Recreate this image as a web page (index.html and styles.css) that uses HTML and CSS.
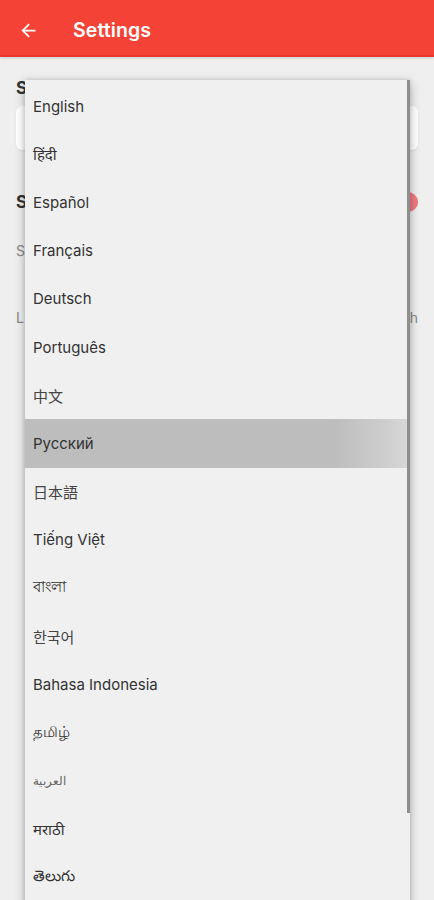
FILE: index.html
```html
<!DOCTYPE html>
<html lang="en">
<head>
<meta charset="utf-8">
<title>Settings</title>
<link rel="stylesheet" href="styles.css">
</head>
<body>
<div class="app">
  <header class="appbar">
    <svg class="back" width="20" height="20" viewBox="0 0 24 24" aria-hidden="true">
      <path d="M20 11H7.83l5.59-5.59L12 4l-8 8 8 8 1.41-1.41L7.83 13H20v-2z" fill="#fff"/>
    </svg>
    <h1 class="title">Settings</h1>
  </header>
  <main class="content">
    <h2 class="section-title">S<span class="under">elect Language</span></h2>
    <div class="select-card"></div>
    <div class="row">
      <h2 class="section-title">S<span class="under">ound</span></h2>
      <span class="toggle"><span class="thumb"></span></span>
    </div>
    <p class="hint">S<span class="under">ound effects</span></p>
    <div class="row muted">
      <span>L<span class="under">anguage</span></span>
      <span>h</span>
    </div>
  </main>

  <div class="menu">
    <ul class="menu-list">
      <li>English</li>
      <li>हिंदी</li>
      <li>Español</li>
      <li>Français</li>
      <li>Deutsch</li>
      <li>Português</li>
      <li class="cjk">中文</li>
      <li class="active">Русский</li>
      <li class="cjk">日本語</li>
      <li>Tiếng Việt</li>
      <li>বাংলা</li>
      <li class="cjk">한국어</li>
      <li>Bahasa Indonesia</li>
      <li>தமிழ்</li>
      <li class="ar">العربية</li>
      <li>मराठी</li>
      <li>తెలుగు</li>
    </ul>
    <div class="scrollbar"></div>
  </div>
</div>
</body>
</html>
```
FILE: styles.css
```css
* { box-sizing: border-box; }
html, body { margin: 0; padding: 0; }
body {
  background: #efefef;
  font-family: Inter, "Open Sans", "Noto Sans", "Noto Sans CJK SC", sans-serif;
  color: #333;
}
.app {
  position: relative;
  width: 434px;
  height: 900px;
  overflow: hidden;
}
.appbar {
  height: 57px;
  background: #f44336;
  border-bottom: 2px solid #e8392c;
  display: flex;
  align-items: center;
  padding: 5px 0 0 18px;
  box-shadow: 0 1px 3px rgba(0,0,0,0.15);
}
.back { width: 21px; height: 21px; }
.title {
  margin: 0 0 0 34px;
  color: #fff;
  font-size: 19.5px;
  font-weight: 600;
  letter-spacing: 0.1px;
}
.content {
  padding: 21px 16px 0 16px;
}
.under { visibility: hidden; }
.section-title {
  margin: 0;
  font-size: 17px;
  font-weight: 700;
  color: #333;
  line-height: 20px;
}
.select-card {
  margin-top: 8px;
  height: 44px;
  background: #fff;
  border-radius: 6px;
  box-shadow: 0 1px 2px rgba(0,0,0,0.08);
}
.row {
  display: flex;
  justify-content: space-between;
  align-items: center;
  margin-top: 42px;
}
.toggle {
  width: 36px;
  height: 14px;
  border-radius: 7px;
  background: #f8a5a0;
  position: relative;
}
.thumb {
  position: absolute;
  right: 0;
  top: -3px;
  width: 20px;
  height: 20px;
  border-radius: 50%;
  background: #f07a82;
}
.hint {
  margin: 30px 0 0 0;
  font-size: 14px;
  color: #888;
}
.muted {
  margin-top: 50px;
  font-size: 14px;
  color: #888;
}
.menu {
  position: absolute;
  left: 25px;
  top: 80px;
  width: 385px;
  height: 840px;
  background: #f0f0f0;
  box-shadow: 0 3px 10px rgba(0,0,0,0.28), 0 0 4px rgba(0,0,0,0.12);
}
.menu-list {
  list-style: none;
  margin: 0;
  padding: 2px 0 0 0;
}
.menu-list li {
  height: 48.2px;
  display: flex;
  align-items: center;
  padding-left: 8px;
  font-size: 15px;
  color: #333;
  font-family: Inter, "Noto Sans", "Noto Sans CJK SC", sans-serif;
}
.menu-list li.cjk {
  font-family: "Noto Sans CJK SC", sans-serif;
  color: #444;
}
.menu-list li.ar {
  font-size: 12px;
  color: #666;
}
.menu-list li.active {
  background: linear-gradient(to right, #bdbdbd 0%, #bdbdbd 80%, #cdcdcd 93%, #d8d8d8 100%);
}
.scrollbar {
  position: absolute;
  right: 0;
  top: 0;
  width: 3px;
  height: 733px;
  background: #8e8e8e;
}
```
